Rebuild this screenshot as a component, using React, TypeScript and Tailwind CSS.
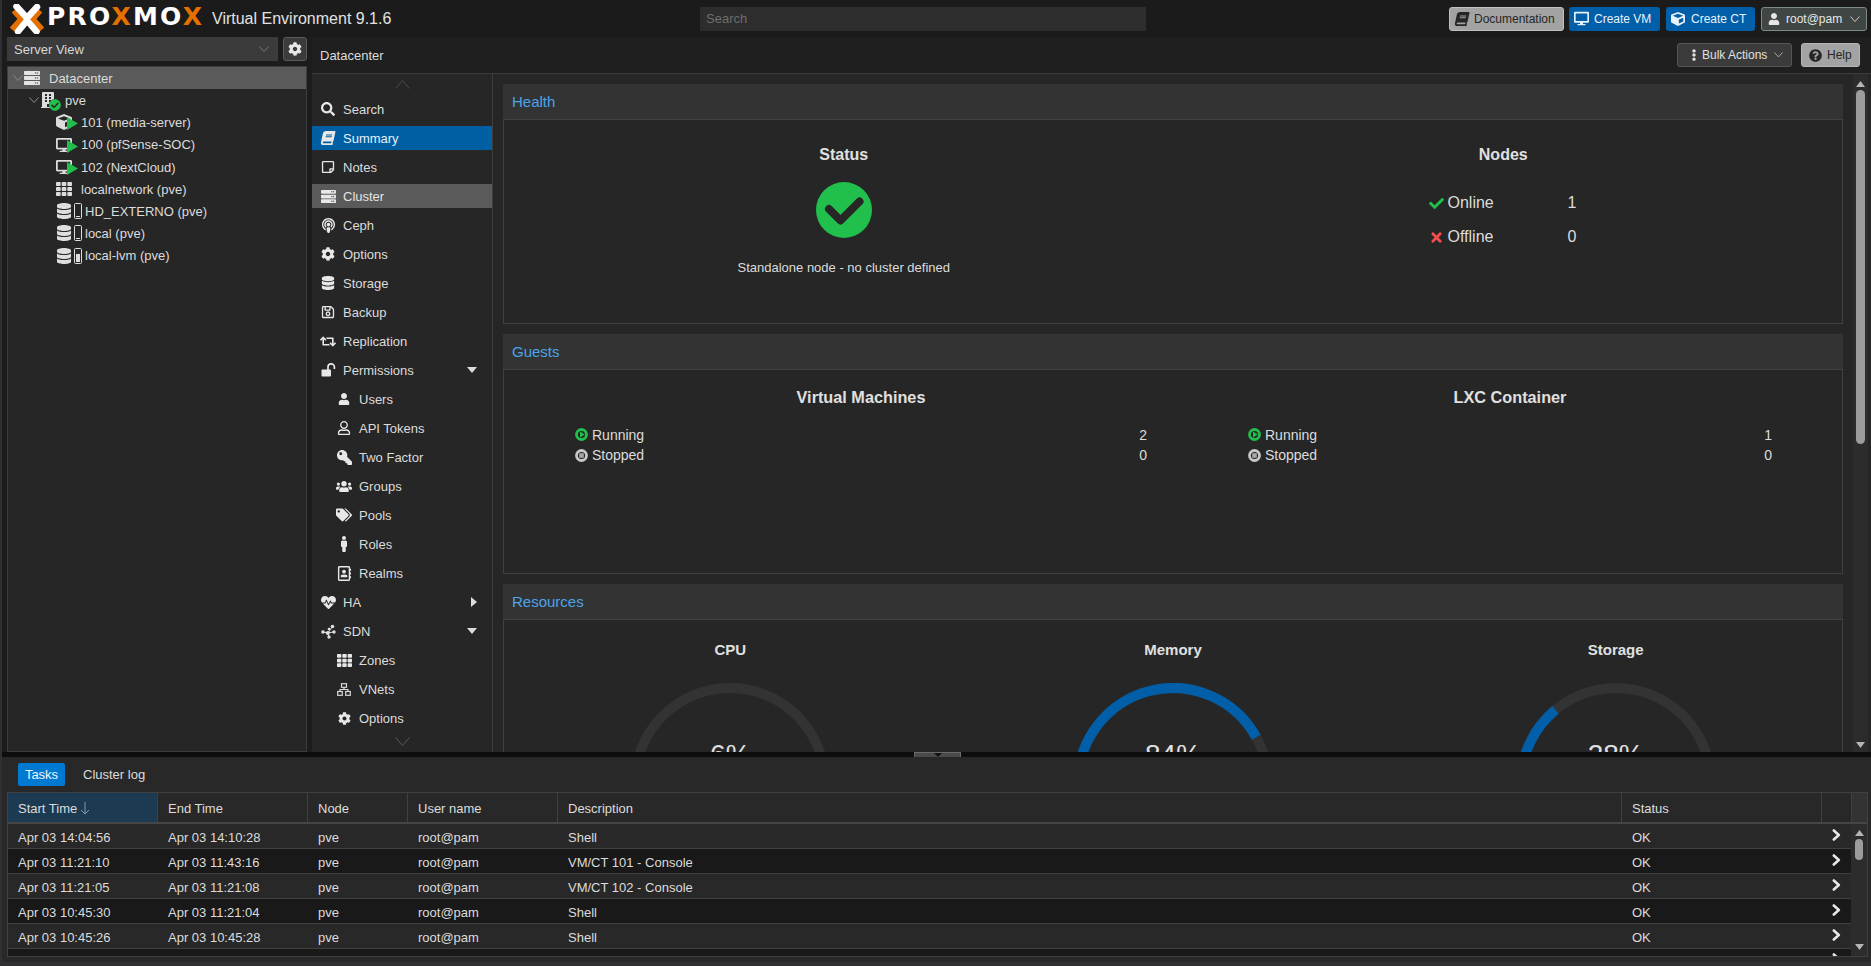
import React from 'react';
import {
  FaSearch, FaBook, FaRegStickyNote, FaServer, FaPodcast, FaCog, FaDatabase, FaRegSave, FaRetweet,
  FaUser, FaRegUser, FaKey, FaUsers, FaTags, FaMale, FaRegAddressBook, FaHeartbeat, FaTh, FaDesktop, FaCube,
  FaEllipsisV, FaQuestionCircle, FaBuilding, FaCheck, FaTimes, FaCheckCircle,
} from 'react-icons/fa';

function Chevron({ dir = 'down', size = 10, color = '#8a8a8a' }: { dir?: 'down' | 'up'; size?: number; color?: string }) {
  const h = size * 0.6;
  const pts = dir === 'down' ? `0.5,0.5 ${size / 2},${h - 0.5} ${size - 0.5},0.5` : `0.5,${h - 0.5} ${size / 2},0.5 ${size - 0.5},${h - 0.5}`;
  return (
    <svg width={size} height={h} className="shrink-0">
      <polyline points={pts} fill="none" stroke={color} strokeWidth="1" />
    </svg>
  );
}

function RowArrow() {
  return (
    <svg width="9" height="12" viewBox="0 0 9 12" className="block">
      <polyline points="1.8,1.5 6.8,6 1.8,10.5" fill="none" stroke="#e8e8e8" strokeWidth="2.6" strokeLinecap="round" strokeLinejoin="round" />
    </svg>
  );
}

function Logo() {
  return (
    <svg width="34" height="30" viewBox="0 0 34 30" className="shrink-0">
      <path d="M4 6.5 L11.5 15 L2 25.5" fill="none" stroke="#e57000" strokeWidth="6" strokeLinejoin="miter" />
      <path d="M30 6.5 L22.5 15 L32 25.5" fill="none" stroke="#e57000" strokeWidth="6" strokeLinejoin="miter" />
      <path d="M6.5 2.5 L17 14 L27 3" fill="none" stroke="#ffffff" strokeWidth="6.5" strokeLinecap="round" strokeLinejoin="round" />
      <path d="M8 27.5 L17 16.5 L26.5 27.5" fill="none" stroke="#ffffff" strokeWidth="6.5" strokeLinecap="round" strokeLinejoin="round" />
    </svg>
  );
}

function SdnIcon() {
  return (
    <svg width="15" height="15" viewBox="0 0 15 15" fill="#e0e0e0">
      <path d="M2 8 L7 9 L11 3 M7 9 L12 8 M7 9 L8 13" stroke="#e0e0e0" strokeWidth="1" fill="none" />
      <circle cx="2" cy="8" r="1.8" /><circle cx="6.8" cy="9" r="2" /><circle cx="11.5" cy="2.5" r="1.8" /><circle cx="13" cy="8" r="1.7" /><circle cx="8" cy="13" r="1.7" /><circle cx="8" cy="5" r="1.3" />
    </svg>
  );
}

function VnetIcon() {
  return (
    <svg width="14" height="13" viewBox="0 0 14 13" fill="none" stroke="#d8d8d8" strokeWidth="1.2">
      <rect x="4.5" y="0.7" width="5" height="3.6" /><rect x="0.7" y="8.5" width="4.6" height="3.8" /><rect x="8.7" y="8.5" width="4.6" height="3.8" />
      <path d="M7 4.3 V6.5 M3 8.5 V6.5 H11 V8.5" />
    </svg>
  );
}

function UnlockIcon() {
  return (
    <svg width="15" height="14" viewBox="0 0 15 14">
      <rect x="0.5" y="6.5" width="9.5" height="7" rx="1" fill="#e8e8e8" />
      <path d="M7 7 V4 a3.2 3.2 0 0 1 6.4 0 V6" fill="none" stroke="#e8e8e8" strokeWidth="1.7" />
    </svg>
  );
}

function Caret({ dir }: { dir: 'down' | 'right' }) {
  return dir === 'down' ? (
    <svg width="10" height="6"><polygon points="0,0 10,0 5,6" fill="#dcdcdc" /></svg>
  ) : (
    <svg width="6" height="10"><polygon points="0,0 6,5 0,10" fill="#dcdcdc" /></svg>
  );
}

type NavItem = { label: string; icon: React.ReactNode; sub?: boolean; active?: boolean; hover?: boolean; caret?: 'down' | 'right' };
const navItems: NavItem[] = [
  { label: 'Search', icon: <FaSearch size={14} /> },
  { label: 'Summary', icon: <FaBook size={14} className="-skew-x-12" />, active: true },
  { label: 'Notes', icon: <FaRegStickyNote size={14} /> },
  { label: 'Cluster', icon: <FaServer size={15} />, hover: true },
  { label: 'Ceph', icon: <FaPodcast size={15} /> },
  { label: 'Options', icon: <FaCog size={14} /> },
  { label: 'Storage', icon: <FaDatabase size={14} /> },
  { label: 'Backup', icon: <FaRegSave size={14} /> },
  { label: 'Replication', icon: <FaRetweet size={17} /> },
  { label: 'Permissions', icon: <UnlockIcon />, caret: 'down' },
  { label: 'Users', icon: <FaUser size={12} />, sub: true },
  { label: 'API Tokens', icon: <FaRegUser size={14} />, sub: true },
  { label: 'Two Factor', icon: <FaKey size={15} className="-scale-x-100" />, sub: true },
  { label: 'Groups', icon: <FaUsers size={17} />, sub: true },
  { label: 'Pools', icon: <FaTags size={16} />, sub: true },
  { label: 'Roles', icon: <FaMale size={16} />, sub: true },
  { label: 'Realms', icon: <FaRegAddressBook size={15} />, sub: true },
  { label: 'HA', icon: <FaHeartbeat size={15} />, caret: 'right' },
  { label: 'SDN', icon: <SdnIcon />, caret: 'down' },
  { label: 'Zones', icon: <FaTh size={15} />, sub: true },
  { label: 'VNets', icon: <VnetIcon />, sub: true },
  { label: 'Options', icon: <FaCog size={13} />, sub: true },
];

function Nav() {
  return (
    <div className="w-[181px] shrink-0 border-r border-[#3d3d3d] bg-[#262626] overflow-hidden flex flex-col">
      <div className="h-[23px] shrink-0 flex items-center justify-center pb-[2px]"><Chevron dir="up" size={15} color="#4a4a4a" /></div>
      <div className="flex flex-col gap-[5px]">
        {navItems.map((n, i) => (
          <div
            key={i}
            className={`h-[24px] flex items-center text-[13px] pr-[15px] ${n.active ? 'bg-[#005fa3] text-[#e6f0f8]' : n.hover ? 'bg-[#5a5a5a] text-[#e4e4e4]' : 'text-[#dcdcdc]'}`}
          >
            <span className={`w-[16px] flex justify-center shrink-0 ${n.sub ? 'ml-[24px]' : 'ml-[8px]'} text-[#e8e8e8]`}>{n.icon}</span>
            <span className="ml-[7px] flex-1 pt-[1px]">{n.label}</span>
            {n.caret && <Caret dir={n.caret} />}
          </div>
        ))}
      </div>
      <div className="h-[22px] shrink-0 flex items-center justify-center"><Chevron dir="down" size={15} color="#5a5a5a" /></div>
    </div>
  );
}

function Badge({ children }: { children: React.ReactNode }) {
  return <span className="absolute right-0 bottom-0">{children}</span>;
}
const PlayBadge = () => (
  <Badge><svg width="11" height="13"><polygon points="0,0 11,6.5 0,13" fill="#21bf4b" /></svg></Badge>
);

function StoreIcon({ fill }: { fill: number }) {
  return (
    <span className="flex items-center gap-[3px] w-[26px] shrink-0 pl-[1px]">
      <svg width="14" height="16" viewBox="0 0 448 512" preserveAspectRatio="none" className="shrink-0 text-[#dedede]">
        <path fill="currentColor" d="M448 73.143v45.714C448 159.143 347.667 192 224 192S0 159.143 0 118.857V73.143C0 32.857 100.333 0 224 0s224 32.857 224 73.143zM448 176v102.857C448 319.143 347.667 352 224 352S0 319.143 0 278.857V176c48.125 33.143 136.208 48.572 224 48.572S399.874 209.143 448 176zm0 160v102.857C448 479.143 347.667 512 224 512S0 479.143 0 438.857V336c48.125 33.143 136.208 48.572 224 48.572S399.874 369.143 448 336z" />
      </svg>
      <svg width="8" height="16" className="shrink-0">
        <rect x="0.5" y="0.5" width="7" height="15" rx="1" fill="none" stroke="#dedede" />
        <rect x="2" y={14 - fill} width="4" height={fill} fill="#dedede" />
      </svg>
    </span>
  );
}

function TreeRow({ pad, icon, label, iconW, gap = 3, selected, chevron }: { pad: number; icon: React.ReactNode; label: string; iconW: number; gap?: number; selected?: boolean; chevron?: boolean }) {
  return (
    <div className={`h-[22.2px] flex items-center text-[13px] text-[#dcdcdc] ${selected ? 'bg-[#5a5a5a]' : ''}`} style={{ paddingLeft: pad }}>
      {chevron && <span className="w-[11px] shrink-0"><Chevron size={10} /></span>}
      <span className="relative flex items-center shrink-0" style={{ width: iconW, marginRight: gap }}>{icon}</span>
      <span className="pt-[1px]">{label}</span>
    </div>
  );
}

function Sidebar() {
  return (
    <div className="w-[305px] shrink-0 bg-[#1c1c1c] pl-[5px] flex flex-col">
      <div className="flex h-[24px] gap-[5px] shrink-0">
        <div className="w-[271px] bg-[#3b3b3b] flex items-center justify-between pl-[7px] pr-[9px] text-[13px] text-[#d8d8d8]">
          <span className="pt-[1px]">Server View</span>
          <Chevron size={10} color="#777777" />
        </div>
        <div className="w-[24px] rounded-[3px] border border-[#5a5a5a] bg-[#3b3b3b] flex items-center justify-center text-[#e8e8e8]"><FaCog size={14} /></div>
      </div>
      <div className="mt-[5px] flex-1 border border-[#3d3d3d] bg-[#262626]">
        <TreeRow pad={5} selected chevron iconW={16} gap={9} label="Datacenter" icon={<FaServer size={16} className="text-[#e4e4e4]" />} />
        <TreeRow pad={21} chevron iconW={21} gap={4} label="pve" icon={
          <span className="relative w-[20px] h-[17px] block">
            <FaBuilding size={16} className="text-[#dcdcdc]" />
            <span className="absolute right-[-1px] bottom-[-2px] bg-[#262626] rounded-full"><FaCheckCircle size={12} className="text-[#21bf4b]" /></span>
          </span>
        } />
        {[['101 (media-server)', 'ct'], ['100 (pfSense-SOC)', 'vm'], ['102 (NextCloud)', 'vm']].map(([l, t]) => (
          <TreeRow key={l} pad={48} iconW={22} gap={3} label={l} icon={
            <span className="relative w-[22px] h-[16px] block">
              {t === 'ct' ? <FaCube size={16} className="text-[#dcdcdc]" /> : <FaDesktop size={16} className="text-[#dcdcdc]" />}
              <PlayBadge />
            </span>
          } />
        ))}
        <TreeRow pad={48} iconW={17} gap={8} label="localnetwork (pve)" icon={<FaTh size={16} className="text-[#dcdcdc]" />} />
        <TreeRow pad={48} iconW={26} gap={3} label="HD_EXTERNO (pve)" icon={<StoreIcon fill={1} />} />
        <TreeRow pad={48} iconW={26} gap={3} label="local (pve)" icon={<StoreIcon fill={1} />} />
        <TreeRow pad={48} iconW={26} gap={3} label="local-lvm (pve)" icon={<StoreIcon fill={8} />} />
      </div>
    </div>
  );
}

function Panel({ title, children, h }: { title: string; children: React.ReactNode; h?: string }) {
  return (
    <div className="shrink-0">
      <div className="h-[36px] bg-[#333333] border-b border-[#424242] flex items-center pl-[9px] pt-[1px] text-[15px] text-[#4aa5ea]">{title}</div>
      <div className={`border-x border-b border-[#404040] ${h ?? ''}`}>{children}</div>
    </div>
  );
}

function RunIcon() {
  return (
    <svg width="13" height="13" viewBox="0 0 13 13" className="shrink-0">
      <circle cx="6.5" cy="6.5" r="5" fill="#262626" stroke="#21bf4b" strokeWidth="2.8" />
      <polygon points="5,3.4 9.8,6.5 5,9.6" fill="#21bf4b" />
    </svg>
  );
}
function StopIcon() {
  return (
    <svg width="13" height="13" viewBox="0 0 13 13" className="shrink-0">
      <circle cx="6.5" cy="6.5" r="5" fill="#262626" stroke="#c8c8c8" strokeWidth="2.8" />
      <rect x="4.2" y="4.2" width="4.6" height="4.6" fill="#a8a8a8" />
    </svg>
  );
}

function GuestCol({ title, w, run, stop, ml }: { title: string; w: string; run: number; stop: number; ml: string }) {
  return (
    <div className={`${w} ${ml} shrink-0`}>
      <div className="h-[20px] leading-[20px] text-center font-bold text-[16.25px] text-[#e0e0e0]">{title}</div>
      <div className="mt-[17px] text-[14px] text-[#dcdcdc]">
        <div className="h-[21px] flex items-center"><RunIcon /><span className="ml-[4px] flex-1 pt-[1px]">Running</span><span className="pt-[1px]">{run}</span></div>
        <div className="h-[21px] flex items-center"><StopIcon /><span className="ml-[4px] flex-1">Stopped</span><span>{stop}</span></div>
      </div>
    </div>
  );
}

function Gauge({ title, pct }: { title: string; pct: number }) {
  const R = 95;
  const a = Math.PI * (1 - pct / 100);
  const x = 100 + R * Math.cos(a);
  const y = 100 - R * Math.sin(a);
  return (
    <div className="flex-1 flex flex-col items-center">
      <div className="h-[18px] leading-[18px] font-bold text-[15px] text-[#e0e0e0]">{title}</div>
      <div className="relative w-[200px] h-[100px] mt-[24px]">
        <svg width="200" height="100" viewBox="0 0 200 100">
          <path d={`M5 100 A${R} ${R} 0 0 1 195 100`} fill="none" stroke="#333333" strokeWidth="10" />
          <path d={`M5 100 A${R} ${R} 0 0 1 ${x} ${y}`} fill="none" stroke="#005fa8" strokeWidth="10" />
        </svg>
        <div className="absolute left-0 right-0 top-[58px] text-center text-[28px] leading-[28px] text-[#e0e0e0]">{pct}%</div>
      </div>
    </div>
  );
}

function Scroller() {
  return (
    <div className="flex-1 min-w-0 overflow-hidden pl-[10px] pr-[10px] pt-[10px] flex flex-col gap-[10px]">
      <Panel title="Health" h="h-[204px]">
        <div className="flex px-[9px] pt-[25px]">
          <div className="flex-1 flex flex-col items-center pl-[1px]">
            <div className="h-[20px] leading-[20px] font-bold text-[16px] text-[#e0e0e0]">Status</div>
            <svg width="56" height="56" viewBox="0 0 56 56" className="mt-[17px]">
              <circle cx="28" cy="28" r="28" fill="#21bf4b" />
              <polyline points="13,27 24.5,38.5 43.5,19.5" fill="none" stroke="#262626" strokeWidth="8" strokeLinejoin="round" strokeLinecap="round" />
            </svg>
            <div className="mt-[22px] h-[16px] leading-[16px] text-[13px] text-[#dcdcdc]">Standalone node - no cluster defined</div>
          </div>
          <div className="flex-1 flex flex-col items-center">
            <div className="h-[20px] leading-[20px] font-bold text-[16px] text-[#e0e0e0]">Nodes</div>
            <div className="self-start ml-[255px] mt-[28px] text-[16px] text-[#dcdcdc]">
              <div className="h-[20px] flex items-center">
                <span className="w-[19px] flex justify-start"><FaCheck size={15} className="text-[#21bf4b]" /></span>
                <span className="w-[120px]">Online</span><span>1</span>
              </div>
              <div className="h-[20px] mt-[14px] flex items-center">
                <span className="w-[19px] flex justify-start"><FaTimes size={15} className="text-[#f54e4e]" /></span>
                <span className="w-[120px]">Offline</span><span>0</span>
              </div>
            </div>
          </div>
        </div>
      </Panel>
      <Panel title="Guests" h="h-[204px]">
        <div className="flex pt-[17px]">
          <GuestCol title="Virtual Machines" w="w-[572px]" ml="ml-[71px]" run={2} stop={0} />
          <GuestCol title="LXC Container" w="w-[524px]" ml="ml-[101px]" run={1} stop={0} />
        </div>
      </Panel>
      <Panel title="Resources">
        <div className="flex px-[5px] pt-[21px] pb-[60px]">
          <Gauge title="CPU" pct={6} />
          <Gauge title="Memory" pct={84} />
          <Gauge title="Storage" pct={28} />
        </div>
      </Panel>
    </div>
  );
}

function VScroll() {
  return (
    <div className="w-[15px] shrink-0 mr-[3px] bg-[#2c2c2c] flex flex-col items-center relative">
      <svg width="9" height="6" className="mt-[7px] shrink-0"><polygon points="0,6 9,6 4.5,0" fill="#b5b5b5" /></svg>
      <div className="w-[9px] h-[354px] mt-[3px] rounded-full bg-[#9c9c9c] shrink-0" />
      <div className="flex-1" />
      <svg width="9" height="6" className="mb-[4px] shrink-0"><polygon points="0,0 9,0 4.5,6" fill="#b5b5b5" /></svg>
    </div>
  );
}

const columns = [
  { label: 'Start Time', w: 'w-[150px]' },
  { label: 'End Time', w: 'w-[150px]' },
  { label: 'Node', w: 'w-[100px]' },
  { label: 'User name', w: 'w-[150px]' },
  { label: 'Description', w: 'w-[1064px]' },
  { label: 'Status', w: 'w-[200px]' },
  { label: '', w: 'w-[30px]' },
];
const rows = [
  ['Apr 03 14:04:56', 'Apr 03 14:10:28', 'pve', 'root@pam', 'Shell', 'OK'],
  ['Apr 03 11:21:10', 'Apr 03 11:43:16', 'pve', 'root@pam', 'VM/CT 101 - Console', 'OK'],
  ['Apr 03 11:21:05', 'Apr 03 11:21:08', 'pve', 'root@pam', 'VM/CT 102 - Console', 'OK'],
  ['Apr 03 10:45:30', 'Apr 03 11:21:04', 'pve', 'root@pam', 'Shell', 'OK'],
  ['Apr 03 10:45:26', 'Apr 03 10:45:28', 'pve', 'root@pam', 'Shell', 'OK'],
];

function TaskGrid() {
  return (
    <div className="ml-[5px] mr-[3px] h-[165px] border border-[#404040] overflow-hidden flex flex-col">
      <div className="flex h-[31px] shrink-0 border-b-2 border-[#454545] bg-[#282828]">
        {columns.map((c, i) => (
          <div key={i} className={`${c.w} shrink-0 flex items-center pl-[10px] text-[13px] text-[#dcdcdc] border-r border-[#404040] ${i === 0 ? 'bg-[#1c3a52]' : ''}`}>
            <span className="pt-[2px]">{c.label}</span>
            {i === 0 && (
              <svg width="10" height="14" className="ml-[3px]"><path d="M5 1 V13 M1 9 L5 13 L9 9" fill="none" stroke="#8a98a4" strokeWidth="1" /></svg>
            )}
          </div>
        ))}
        <div className="flex-1 bg-[#333333]" />
      </div>
      <div className="flex flex-1 min-h-0">
        <div className="flex-1 min-w-0 overflow-hidden">
          {rows.map((r, i) => (
            <div key={i} className={`h-[25px] flex items-center text-[13px] text-[#dcdcdc] border-b border-[#404040] ${i % 2 ? 'bg-[#191919]' : 'bg-[#282828]'}`}>
              {r.map((v, j) => <div key={j} className={`${columns[j].w} shrink-0 pl-[10px] pt-[3px]`}>{v}</div>)}
              <div className="w-[30px] shrink-0 pl-[10px] pb-[2px]"><RowArrow /></div>
            </div>
          ))}
          <div className="h-[25px] bg-[#191919] flex pt-[4px]"><div className="ml-[1824px]"><RowArrow /></div></div>
        </div>
        <div className="w-[16px] shrink-0 bg-[#2c2c2c] flex flex-col items-center">
          <svg width="9" height="6" className="mt-[6px] shrink-0"><polygon points="0,6 9,6 4.5,0" fill="#b5b5b5" /></svg>
          <div className="w-[8px] h-[21px] mt-[3px] rounded-full bg-[#9c9c9c] shrink-0" />
          <div className="flex-1" />
          <svg width="9" height="6" className="mb-[6px] shrink-0"><polygon points="0,0 9,0 4.5,6" fill="#b5b5b5" /></svg>
        </div>
      </div>
    </div>
  );
}

export default function App() {
  return (
    <div className="w-[1871px] h-[966px] overflow-hidden bg-[#2f2f34] pl-[2px] flex flex-col font-['Liberation_Sans','Arial',sans-serif]">
      <header className="h-[37px] shrink-0 bg-[#1b1b1b] flex items-center pl-[8px] pr-[4px]">
        <Logo />
        <div className="ml-[3px] mt-[-3px] font-['DejaVu_Sans',sans-serif] font-bold text-[25px] leading-[30px] tracking-[2.2px] text-white whitespace-nowrap w-[161px] overflow-hidden">
          PRO<span className="text-[#e57000]">X</span>MO<span className="text-[#e57000]">X</span>
        </div>
        <div className="ml-[4px] text-[16px] text-[#e2e2e2] w-[180px] whitespace-nowrap">Virtual Environment 9.1.6</div>
        <div className="ml-[308px] w-[446px] h-[24px] bg-[#2d2d2d] flex items-center pl-[6px] text-[13px] text-[#6e6e6e]">Search</div>
        <div className="ml-auto flex items-center h-[24px] text-[12px]">
          <div className="w-[115px] h-full rounded-[3px] border border-[#c0c0c0] bg-[#a3a3a3] text-[#262626] flex items-center pl-[5px]">
            <FaBook size={14} className="-skew-x-12" /><span className="ml-[5px]">Documentation</span>
          </div>
          <div className="ml-[5px] w-[91px] h-full rounded-[3px] bg-[#005fa8] text-[#e8f2fa] flex items-center pl-[5px]">
            <FaDesktop size={15} /><span className="ml-[5px]">Create VM</span>
          </div>
          <div className="ml-[6px] w-[89px] h-full rounded-[3px] bg-[#005fa8] text-[#e8f2fa] flex items-center pl-[5px]">
            <FaCube size={14} /><span className="ml-[6px]">Create CT</span>
          </div>
          <div className="ml-[6px] w-[106px] h-full rounded-[3px] border border-[#7d8a86] bg-[#3f4644] text-[#e6e6e6] flex items-center pl-[6px] pr-[6px]">
            <FaUser size={12} /><span className="ml-[6px] flex-1">root@pam</span><Chevron size={10} color="#c8c8c8" />
          </div>
        </div>
      </header>

      <div className="h-[715px] shrink-0 flex bg-[#1c1c1c]">
        <Sidebar />
        <main className="ml-[5px] flex-1 min-w-0 flex flex-col bg-[#262626]">
          <div className="h-[37px] shrink-0 bg-[#1f1f1f] border-b border-[#3d3d3d] flex items-center pl-[8px] pr-[11px]">
            <span className="text-[13px] text-[#dcdcdc] pt-[1px]">Datacenter</span>
            <div className="ml-auto flex h-[24px] text-[12px]">
              <div className="w-[115px] rounded-[3px] border border-[#555555] bg-[#3b3b3b] text-[#e0e0e0] flex items-center pl-[10px]">
                <FaEllipsisV size={12} /><span className="ml-[2px] flex-1">Bulk Actions</span><span className="mr-[8px]"><Chevron size={9} color="#aaaaaa" /></span>
              </div>
              <div className="ml-[9px] w-[59px] rounded-[3px] border border-[#b5b5b5] bg-[#a3a3a3] text-[#262626] flex items-center pl-[7px]">
                <FaQuestionCircle size={13} /><span className="ml-[5px]">Help</span>
              </div>
            </div>
          </div>
          <div className="flex-1 min-h-0 flex">
            <Nav />
            <Scroller />
            <VScroll />
          </div>
        </main>
      </div>

      <div className="h-[5px] shrink-0 bg-[#0d0d0d] flex justify-start">
        <div className="ml-[912px] w-[47px] h-[5px] bg-[#4a4a4a] border-t border-x border-[#6a6a6a] flex justify-center">
          <svg width="8" height="4"><polygon points="0,0 8,0 4,4" fill="#111111" /></svg>
        </div>
      </div>

      <div className="h-[205px] shrink-0 bg-[#282828] rounded-bl-[3px]">
        <div className="h-[35px] pt-[6px] pl-[16px] flex text-[13px]">
          <div className="w-[47px] h-[23px] rounded-[2px] bg-[#0079d3] text-[#f0f6fb] flex items-center justify-center">Tasks</div>
          <div className="ml-[18px] h-[23px] flex items-center text-[#dcdcdc]">Cluster log</div>
        </div>
        <TaskGrid />
      </div>
    </div>
  );
}
